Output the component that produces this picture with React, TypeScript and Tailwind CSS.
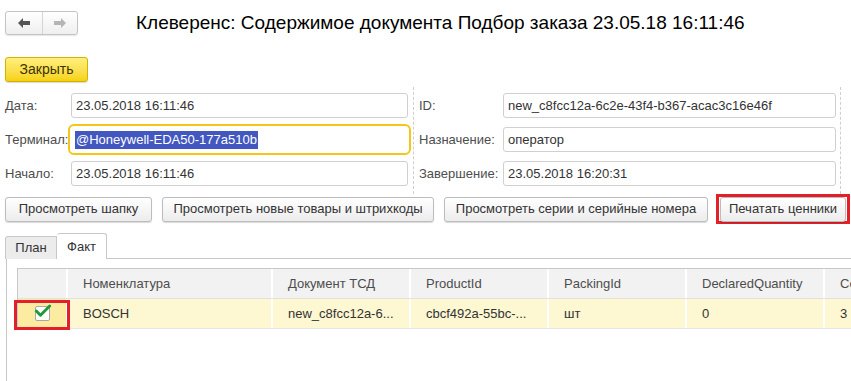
import { Check } from "lucide-react";

const cols = [
  { title: "", w: "w-[50px]" },
  { title: "Номенклатура", w: "w-[205px]" },
  { title: "Документ ТСД", w: "w-[138px]" },
  { title: "ProductId", w: "w-[138px]" },
  { title: "PackingId", w: "w-[138px]" },
  { title: "DeclaredQuantity", w: "w-[138px]" },
  { title: "Co", w: "w-[138px]" },
];

const row = ["", "BOSCH", "new_c8fcc12a-6...", "cbcf492a-55bc-...", "шт", "0", "3"];

function Field({ label, value, labelW, focused }: { label: string; value: string; labelW: string; focused?: boolean }) {
  return (
    <div className="flex items-center h-[25px]">
      <div className={`${labelW} shrink-0 text-[13px] text-[#4d4d4d] whitespace-nowrap`}>{label}</div>
      <div
        className={
          focused
            ? "flex-1 h-[25px] flex items-center px-[3px] rounded-[3px] outline-2 outline-offset-1 outline-[#f5c518] border border-transparent"
            : "flex-1 h-[25px] flex items-center px-[4px] rounded-[3px] border border-[#d0d0d0]"
        }
      >
        {focused ? (
          <span className="bg-[#4257c0] text-white text-[13px] leading-[18px] px-[1px]">{value}</span>
        ) : (
          <span className="text-[13px] text-[#333]">{value}</span>
        )}
      </div>
    </div>
  );
}

function Btn({ children, w }: { children: React.ReactNode; w: string }) {
  return (
    <div
      className={`${w} h-[25px] flex items-center justify-center rounded-[3px] border border-[#bcbcbc] bg-linear-to-b from-white to-[#ececec] shadow-[0_1px_1px_rgba(0,0,0,0.15)] text-[13px] text-[#333] whitespace-nowrap`}
    >
      {children}
    </div>
  );
}

export default function App() {
  return (
    <div className="w-[851px] h-[381px] overflow-hidden bg-white font-['Liberation_Sans',Arial,sans-serif] text-[#333]">
      {/* header */}
      <div className="flex items-center pl-[5px] pt-[11px]">
        <div className="flex w-[73px] h-[24px] rounded-[3px] border border-[#c4c4c4] bg-linear-to-b from-white to-[#efefef] shadow-[0_1px_1px_rgba(0,0,0,0.1)]">
          <div className="w-[37px] flex items-center justify-center border-r border-[#d4d4d4]">
            <svg width="14" height="12" viewBox="0 0 14 12">
              <path d="M1 6 L6 1 L6 4 L13 4 L13 8 L6 8 L6 11 Z" fill="#555" />
            </svg>
          </div>
          <div className="flex-1 flex items-center justify-center">
            <svg width="14" height="12" viewBox="0 0 14 12">
              <path d="M13 6 L8 1 L8 4 L1 4 L1 8 L8 8 L8 11 Z" fill="#b5b5b5" />
            </svg>
          </div>
        </div>
        <div className="ml-[58px] text-[19px] text-black leading-[24px] whitespace-nowrap">
          Клеверенс: Содержимое документа Подбор заказа 23.05.18 16:11:46
        </div>
      </div>

      {/* close */}
      <div className="pl-[5px] mt-[22px]">
        <div className="w-[83px] h-[25px] flex items-center justify-center rounded-[3px] border border-[#d3b100] bg-linear-to-b from-[#fff07a] to-[#f6d200] shadow-[0_1px_1px_rgba(0,0,0,0.15)] text-[14px] text-[#3d3300]">
          Закрыть
        </div>
      </div>

      {/* form */}
      <div className="flex mt-[5px] h-[107px]">
        <div className="w-[408px] pl-[5px] pt-[6px] flex flex-col gap-[9px]">
          <Field label="Дата:" value="23.05.2018 16:11:46" labelW="w-[66px]" />
          <Field label="Терминал:" value="@Honeywell-EDA50-177a510b" labelW="w-[66px]" focused />
          <Field label="Начало:" value="23.05.2018 16:11:46" labelW="w-[66px]" />
        </div>
        <div className="ml-[5px] border-l border-dashed border-[#cfcfcf]" />
        <div className="w-[422px] pl-[5px] pt-[6px] flex flex-col gap-[9px]">
          <Field label="ID:" value="new_c8fcc12a-6c2e-43f4-b367-acac3c16e46f" labelW="w-[84px]" />
          <Field label="Назначение:" value="оператор" labelW="w-[84px]" />
          <Field label="Завершение:" value="23.05.2018 16:20:31" labelW="w-[84px]" />
        </div>
        <div className="ml-[4px] border-l border-dashed border-[#cfcfcf]" />
      </div>

      {/* buttons */}
      <div className="flex items-center pl-[5px] h-[30px]">
        <Btn w="w-[147px]">Просмотреть шапку</Btn>
        <div className="ml-[10px]">
          <Btn w="w-[272px]">Просмотреть новые товары и штрихкоды</Btn>
        </div>
        <div className="ml-[10px]">
          <Btn w="w-[264px]">Просмотреть серии и серийные номера</Btn>
        </div>
        <div className="ml-[8px] border-[3px] border-[#e3202a] h-[30px] flex items-center px-[1px]">
          <Btn w="w-[126px]">Печатать ценники</Btn>
        </div>
      </div>

      {/* tabs */}
      <div className="flex pl-[5px] mt-[9px] h-[26px] items-end">
        <div className="w-[52px] h-[23px] flex items-center justify-center bg-[#ececec] border border-[#c8c8c8] border-b-0 rounded-tl-[3px] text-[13px] text-[#333]">
          План
        </div>
        <div className="w-[50px] h-[26px] flex items-center justify-center bg-white border border-[#c8c8c8] border-b-0 border-l-0 rounded-t-[3px] text-[13px] text-[#333]">
          Факт
        </div>
        <div className="flex-1 border-b border-[#c8c8c8]" />
      </div>

      {/* panel */}
      <div className="ml-[6px] border-l border-[#c8c8c8] h-[124px] pl-[10px] pt-[9px]">
        <div className="relative border-l border-t border-[#c8c8c8]">
          <div className="flex h-[30px] bg-[#f2f2f2] border-b border-[#e2e2e2]">
            {cols.map((c, i) => (
              <div
                key={i}
                className={`${c.w} shrink-0 flex items-center pl-[15px] text-[13px] text-[#4d4d4d] whitespace-nowrap overflow-hidden border-r-2 border-white`}
              >
                {c.title}
              </div>
            ))}
          </div>
          <div className="flex h-[30px] bg-[#fdf7d2] border-b border-[#e6e6e6]">
            {row.map((v, i) => (
              <div
                key={i}
                className={`${cols[i].w} shrink-0 flex items-center ${i === 0 ? "justify-center bg-[#fbeca2]" : "pl-[15px]"} text-[13px] text-[#333] whitespace-nowrap overflow-hidden border-r-2 border-white`}
              >
                {i === 0 ? (
                  <div className="w-[15px] h-[15px] bg-white border border-[#a8a8a8] rounded-[2px] flex items-center justify-center">
                    <Check className="size-[20px] shrink-0 text-[#1f9a3a] -mt-[6px] ml-[1px]" strokeWidth={3.5} />
                  </div>
                ) : (
                  v
                )}
              </div>
            ))}
          </div>
          <div className="absolute left-[-4px] top-[31px] w-[56px] h-[30px] border-[3px] border-[#e3202a]" />
        </div>
      </div>
    </div>
  );
}
